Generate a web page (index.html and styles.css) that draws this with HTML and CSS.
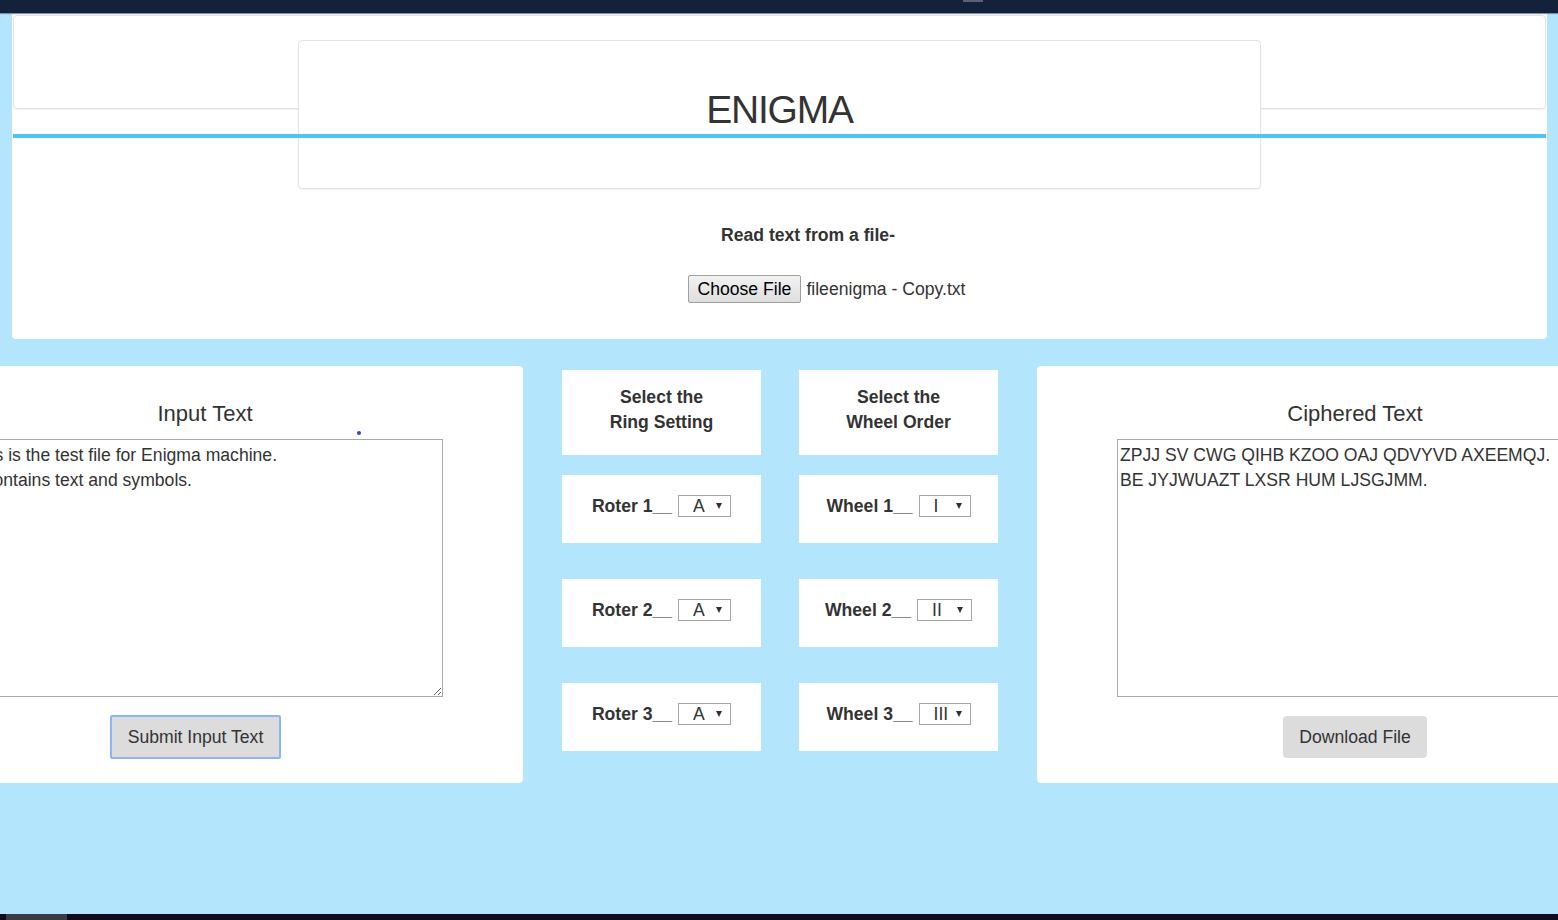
FILE: index.html
```html
<!DOCTYPE html>
<html lang="en">
<head>
<meta charset="utf-8">
<title>Enigma</title>
<link rel="stylesheet" href="styles.css">
</head>
<body>
<div class="topbar"><span class="topbar-mark"></span></div>

<header class="top-card">
  <div class="strip"></div>
  <div class="accent"></div>
  <div class="title-box"><h1 class="title">ENIGMA</h1></div>
  <div class="file-section">
    <p class="file-label">Read text from a file-</p>
    <div class="file-row">
      <button class="file-btn" type="button">Choose File</button>
      <span class="file-name">fileenigma - Copy.txt</span>
    </div>
  </div>
</header>

<main class="row">
  <section class="panel">
    <h2 class="panel-title">Input Text</h2>
    <textarea class="text-box">This is the test file for Enigma machine.
It contains text and symbols.</textarea>
    <button class="btn btn-submit" type="button">Submit Input Text</button>
    <span class="cursor-dot"></span>
  </section>

  <div class="col">
    <div class="col-head">Select the<br>Ring Setting</div>
    <div class="setting"><span class="setting-label">Roter 1__</span><span class="sel"><select class="sel-a"><option>A</option></select></span></div>
    <div class="setting"><span class="setting-label">Roter 2__</span><span class="sel"><select class="sel-a"><option>A</option></select></span></div>
    <div class="setting"><span class="setting-label">Roter 3__</span><span class="sel"><select class="sel-a"><option>A</option></select></span></div>
  </div>

  <div class="col col-right">
    <div class="col-head">Select the<br>Wheel Order</div>
    <div class="setting"><span class="setting-label">Wheel 1__</span><span class="sel"><select class="sel-w"><option>I</option></select></span></div>
    <div class="setting"><span class="setting-label">Wheel 2__</span><span class="sel"><select class="sel-w2"><option>II</option></select></span></div>
    <div class="setting"><span class="setting-label">Wheel 3__</span><span class="sel"><select class="sel-w"><option>III</option></select></span></div>
  </div>

  <section class="panel panel-right">
    <h2 class="panel-title">Ciphered Text</h2>
    <textarea class="text-box">ZPJJ SV CWG QIHB KZOO OAJ QDVYVD AXEEMQJ.
BE JYJWUAZT LXSR HUM LJSGJMM.</textarea>
    <button class="btn btn-download" type="button">Download File</button>
  </section>
</main>

<div class="spacer"></div>
<footer class="taskbar"><span class="taskbar-item"></span></footer>
</body>
</html>
```

FILE: styles.css
```css
html, body {
  margin: 0;
  padding: 0;
  overflow: hidden;
}

body {
  width: 1558px;
  height: 920px;
  background: #b3e5fc;
  font-family: "Liberation Sans", Arial, sans-serif;
  font-size: 17.6px;
  color: #333;
  display: flex;
  flex-direction: column;
}

.topbar {
  position: relative;
  flex: 0 0 13px;
  background: #13223a;
  box-shadow: 0 1px 1px rgba(0, 0, 0, 0.35);
  z-index: 3;
}

.topbar-mark {
  position: absolute;
  left: 963px;
  top: 0;
  width: 20px;
  height: 2px;
  background: #5c6270;
}

/* ---------- top card ---------- */
.top-card {
  position: relative;
  flex: 0 0 auto;
  box-sizing: border-box;
  width: 1535px;
  height: 325px;
  margin: 1px 0 0 12px;
  background: #fff;
  border-radius: 0 0 4px 4px;
}

.strip {
  box-sizing: border-box;
  height: 94px;
  margin: 1px 1px 0 1px;
  border: 1px solid #e2e2e2;
  border-radius: 4px;
  box-shadow: 0 1px 2px rgba(0, 0, 0, 0.06);
}

.accent {
  position: relative;
  z-index: 2;
  height: 4px;
  margin: 25px 1px 0 1px;
  background: #4fc3f7;
}

.title-box {
  position: absolute;
  z-index: 1;
  top: 26px;
  left: 286px;
  width: 963px;
  height: 149px;
  box-sizing: border-box;
  padding-top: 49px;
  background: #fff;
  border: 1px solid #e3e3e3;
  border-radius: 4px;
  box-shadow: 0 1px 2px rgba(0, 0, 0, 0.05);
  text-align: center;
}

.title {
  margin: 0;
  font-size: 39px;
  line-height: 39px;
  font-weight: normal;
  letter-spacing: -1.2px;
  color: #333;
}

.file-section {
  position: relative;
  z-index: 2;
  padding-top: 85px;
}

.file-label {
  margin: 0;
  padding-left: 57px;
  text-align: center;
  font-weight: bold;
  line-height: 25px;
}

.file-row {
  display: flex;
  justify-content: center;
  align-items: center;
  gap: 5px;
  margin-top: 27px;
  padding-left: 94px;
}

.file-btn {
  box-sizing: border-box;
  height: 28px;
  padding: 0 9px;
  font-family: inherit;
  font-size: 17.6px;
  color: #000;
  background: linear-gradient(#f2f2f2, #dedede);
  border: 1px solid #a0a0a0;
  border-radius: 2px;
}

.file-name {
  color: #333;
  line-height: 28px;
}

/* ---------- bottom row ---------- */
.row {
  flex: 0 0 auto;
  display: flex;
  justify-content: center;
  align-items: flex-start;
  margin-top: 27px;
  padding-left: 2px;
}

.panel {
  position: relative;
  flex: 0 0 636px;
  box-sizing: border-box;
  height: 417px;
  padding: 35px 80px 0;
  margin-right: 39px;
  background: #fff;
  border-radius: 4px;
  text-align: center;
}

.panel-right {
  margin-right: 0;
}

.panel-title {
  margin: 0 0 12px;
  font-size: 22px;
  line-height: 26px;
  font-weight: normal;
  color: #333;
}

.text-box {
  display: block;
  box-sizing: border-box;
  width: 476px;
  height: 258px;
  margin: 0;
  padding: 3px 2px 2px;
  border: 1px solid #a9a9a9;
  font-family: "Liberation Sans", Arial, sans-serif;
  font-size: 17.6px;
  line-height: 25px;
  color: #333;
  background: #fff;
  text-align: left;
}

.btn {
  box-sizing: border-box;
  font-family: inherit;
  font-size: 17.6px;
  color: #333;
  background: #dcdcdc;
}

.btn-submit {
  height: 44px;
  margin: 18px 19px 0 0;
  padding: 0 16px;
  border: 2px solid #8db4f5;
  border-radius: 2px;
}

.btn-download {
  height: 42px;
  margin-top: 19px;
  padding: 0 16px;
  border: none;
  border-radius: 4px;
}

.cursor-dot {
  position: absolute;
  left: 470px;
  top: 65px;
  width: 4px;
  height: 4px;
  border-radius: 50%;
  background: #3442cc;
}

.col {
  flex: 0 0 199px;
  margin: 4px 38px 0 0;
  display: flex;
  flex-direction: column;
}

.col-right {
  margin-right: 39px;
}

.col-head {
  box-sizing: border-box;
  height: 85px;
  padding-top: 15px;
  background: #fff;
  text-align: center;
  font-weight: bold;
  line-height: 25px;
}

.setting {
  box-sizing: border-box;
  height: 68px;
  margin-top: 36px;
  padding-top: 20px;
  background: #fff;
  display: flex;
  justify-content: center;
  align-items: flex-start;
  gap: 6px;
}

.col-head + .setting {
  margin-top: 20px;
}

.setting-label {
  font-weight: bold;
  line-height: 22px;
}

.sel {
  position: relative;
  display: inline-block;
  height: 22px;
}

.sel::after {
  content: "";
  position: absolute;
  right: 9px;
  top: 8px;
  border-left: 3.5px solid transparent;
  border-right: 3.5px solid transparent;
  border-top: 6px solid #333;
  pointer-events: none;
}

.sel select {
  -webkit-appearance: none;
  appearance: none;
  box-sizing: border-box;
  display: block;
  height: 22px;
  margin: 0;
  padding: 0 0 0 14px;
  border: 1px solid #a6a6a6;
  border-radius: 0;
  background: #fff;
  font-family: "Liberation Sans", Arial, sans-serif;
  font-size: 17.6px;
  line-height: 20px;
  color: #333;
}

.sel-a { width: 53px; }
.sel-w { width: 52px; }
.sel-w2 { width: 55px; }

.spacer {
  flex: 1 1 auto;
}

.taskbar {
  flex: 0 0 6px;
  background: #120b1e;
  position: relative;
}

.taskbar-item {
  position: absolute;
  left: 6px;
  top: 0;
  width: 61px;
  height: 6px;
  background: #3b3a47;
}
```
